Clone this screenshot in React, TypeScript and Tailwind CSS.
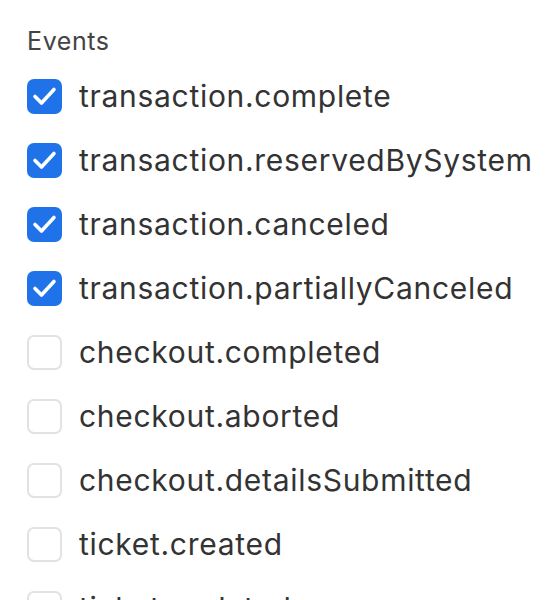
const events: { name: string; checked: boolean }[] = [
  { name: 'transaction.complete', checked: true },
  { name: 'transaction.reservedBySystem', checked: true },
  { name: 'transaction.canceled', checked: true },
  { name: 'transaction.partiallyCanceled', checked: true },
  { name: 'checkout.completed', checked: false },
  { name: 'checkout.aborted', checked: false },
  { name: 'checkout.detailsSubmitted', checked: false },
  { name: 'ticket.created', checked: false },
  { name: 'ticket.updated', checked: false },
];

function Box({ checked }: { checked: boolean }) {
  if (checked) {
    return (
      <span className="flex h-[35px] w-[35px] shrink-0 items-center justify-center rounded-[7px] bg-[#1f72e8]">
        <svg width="35" height="35" viewBox="0 0 35 35" fill="none">
          <path d="M8 17.5 L14.5 24 L27 10.5" stroke="white" strokeWidth="3.6" strokeLinecap="round" strokeLinejoin="round" />
        </svg>
      </span>
    );
  }
  return <span className="h-[35px] w-[35px] shrink-0 rounded-[7px] border-2 border-[#e2e2e2] bg-white" />;
}

export default function App() {
  return (
    <div className="h-[600px] overflow-hidden bg-white px-[27px] pt-[24px] font-['Inter',sans-serif] text-[#333]">
      <div className="text-[25px] leading-[34px] tracking-[0.6px] text-[#444]">Events</div>
      <div className="mt-[21px] flex flex-col gap-[29px]">
        {events.map((e) => (
          <label key={e.name} className="flex h-[35px] items-center gap-[17px]">
            <Box checked={e.checked} />
            <span className="whitespace-nowrap text-[30px] leading-[35px] tracking-[0.7px]">{e.name}</span>
          </label>
        ))}
      </div>
    </div>
  );
}
